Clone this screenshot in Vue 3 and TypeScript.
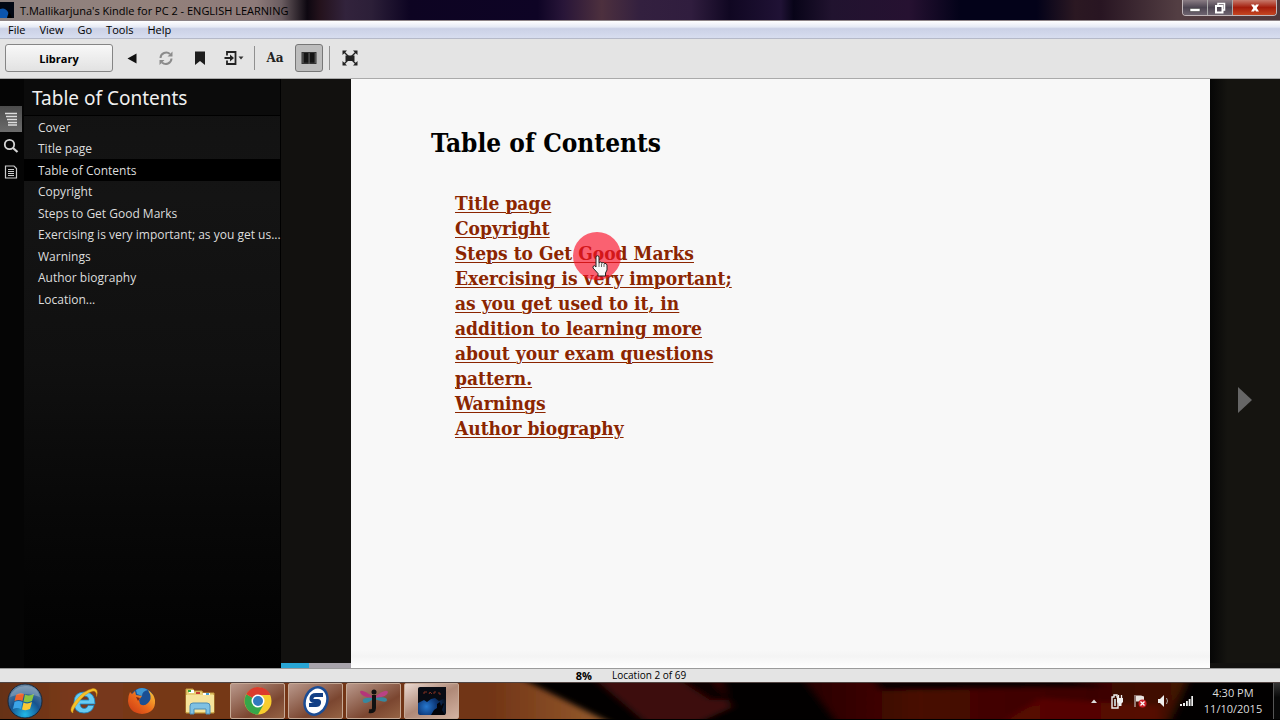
<script setup lang="ts">
import { ref } from 'vue'

const menus = ['File', 'View', 'Go', 'Tools', 'Help']

const contents = [
  'Cover',
  'Title page',
  'Table of Contents',
  'Copyright',
  'Steps to Get Good Marks',
  'Exercising is very important; as you get us...',
  'Warnings',
  'Author biography',
  'Location...',
]
const selected = ref(2)

const links = [
  'Title page',
  'Copyright',
  'Steps to Get Good Marks',
  'Exercising is very important; as you get used to it, in addition to learning more about your exam questions pattern.',
  'Warnings',
  'Author biography',
]

const progress = ref(8)
</script>

<template>
  <div class="desktop">
    <header class="titlebar">
      <svg class="app-icon" width="14" height="16" viewBox="0 0 14 16" aria-hidden="true">
        <rect width="14" height="16" fill="#020814" />
        <path d="M0 7q5-2 8 3l1 6H0z" fill="#0b55ae" />
        <path d="M7 16q1-5 3-5l2 5z" fill="#000" />
      </svg>
      <h1>T.Mallikarjuna's Kindle for PC 2 - ENGLISH LEARNING</h1>
      <div class="window-buttons">
        <button type="button" aria-label="Minimize">
          <svg width="12" height="12" viewBox="0 0 12 12"><path d="M1 6.500h10v3H1z" fill="#fff" stroke="#444" stroke-width=".6" /></svg>
        </button>
        <button type="button" aria-label="Restore">
          <svg width="12" height="12" viewBox="0 0 12 12" fill="none" stroke="#fff" stroke-width="1.500"><path d="M4 3V1.500h6.500V8H9" /><path d="M2 4h6.500v6.500H2z" stroke-width="2" /></svg>
        </button>
        <button type="button" class="close" aria-label="Close">
          <svg width="12" height="12" viewBox="0 0 12 12"><path d="M2 2.500h3l1 1.500 1-1.500h3L7.700 6 10 9.500H7L6 8 5 9.500H2L4.300 6z" fill="#fff" /></svg>
        </button>
      </div>
    </header>

    <nav class="menubar">
      <button v-for="m in menus" :key="m" type="button">{{ m }}</button>
    </nav>

    <div class="toolbar">
      <button type="button" class="library">Library</button>
      <button type="button" class="tool" aria-label="Back">
        <svg width="20" height="20" viewBox="0 0 20 20"><path d="M14.500 5.500v10L5.500 10.500z" fill="#111" /></svg>
      </button>
      <button type="button" class="tool" aria-label="Sync">
        <svg width="20" height="20" viewBox="0 0 20 20" fill="none" stroke="#8b8b8b" stroke-width="2">
          <path d="M4.500 10a5.700 5.700 0 0 1 9.500-4M15.500 10.500A5.700 5.700 0 0 1 6 14.500" />
          <path d="M16.500 3.500v5H11.500zM3.500 17v-5h5z" fill="#8b8b8b" stroke="none" />
        </svg>
      </button>
      <button type="button" class="tool" aria-label="Bookmark">
        <svg width="20" height="20" viewBox="0 0 20 20"><path d="M5 3.500h10v13.500l-5-4-5 4z" fill="#1d1d1d" /></svg>
      </button>
      <button type="button" class="tool" aria-label="Go to">
        <svg width="22" height="20" viewBox="0 0 22 20" fill="none" stroke="#222" stroke-width="1.800">
          <path d="M4 7.500V4h8.500v12H4v-3.500M1.500 10h7" />
          <path d="M7 6.500l4 3.500-4 3.500z" fill="#222" stroke="none" />
          <path d="M15.500 8.500h5L18 11.500z" fill="#333" stroke="none" />
        </svg>
      </button>
      <span class="rule"></span>
      <button type="button" class="tool aa" aria-label="Display options">Aa</button>
      <button type="button" class="tool pressed" aria-label="Two columns" aria-pressed="true">
        <svg width="20" height="20" viewBox="0 0 20 20">
          <path d="M2.500 4h15v12h-15z" fill="#333" />
          <path d="M4.500 5h5v9.500h-5zM10.700 5h5v9.500h-5z" fill="#151515" />
          <path d="M10.100 5v11M4 5v10M16.200 5v10" stroke="#6d6d6d" stroke-width=".8" />
        </svg>
      </button>
      <span class="rule"></span>
      <button type="button" class="tool" aria-label="Full screen">
        <svg width="20" height="20" viewBox="0 0 20 20">
          <path d="M5.500 7.500h9v5.500h-9z" fill="#222" />
          <path d="M4 4l12 12M16 4L4 16" stroke="#222" stroke-width="1.400" />
          <path d="M2.500 2.500H7L2.500 7zM17.500 2.500H13L17.500 7zM2.500 17.500H7L2.500 13zM17.500 17.500H13l4.500-4.500z" fill="#222" />
        </svg>
      </button>
    </div>

    <main class="workspace">
      <nav class="rail">
        <button type="button" class="on" aria-label="Contents">
          <svg width="22" height="26" viewBox="0 0 22 26" stroke="#ddd" stroke-width="1.300"><path d="M5 7.500h12M6 10.500h11M7 13.500h10M8 16.500h9M8 19h9" /></svg>
        </button>
        <button type="button" aria-label="Search">
          <svg width="22" height="28" viewBox="0 0 22 28" fill="none" stroke="#d5d5d5" stroke-width="1.800"><circle cx="9.500" cy="12.500" r="4.700" /><path d="M13 16l4.500 4" stroke-width="2.200" /></svg>
        </button>
        <button type="button" aria-label="Notes">
          <svg width="22" height="26" viewBox="0 0 22 26" fill="none" stroke="#ccc" stroke-width="1.200"><path d="M5.500 6h8.500l2.500 2.500v9.500h-11z" /><path d="M8 9.500h6M8 11.500h6M8 13.500h6M8 15.500h6" stroke-width="1" /></svg>
        </button>
      </nav>

      <aside class="panel">
        <h2>Table of Contents</h2>
        <ul>
          <li v-for="(c, i) in contents" :key="c">
            <button type="button" :class="{ current: i === selected }" @click="selected = i">{{ c }}</button>
          </li>
        </ul>
      </aside>

      <section class="reader">
        <div class="spread">
          <article class="page">
            <h2>Table of Contents</h2>
            <ul>
              <li v-for="l in links" :key="l"><a href="#">{{ l }}</a></li>
            </ul>
            <span class="tap"></span>
            <svg class="pointer" width="16" height="22" viewBox="0 0 16 22" aria-hidden="true">
              <path d="M4 1.500q1.500-1.500 3 0V8l1.500-1 1.500 1 1.500-.5 1 1.200 1.500-.2 1 1.500v5l-1.500 3v3H6v-2.500L1 13v-1.500l1.500-.8L4 12z" fill="#f8f8f8" stroke="#222" stroke-width="1" />
              <path d="M7 8v4M9.500 8.500V12M12 9v3" stroke="#444" stroke-width=".8" />
            </svg>
          </article>
          <button type="button" class="next" aria-label="Next page">
            <svg width="16" height="28" viewBox="0 0 16 28"><path d="M1 1v26l14-13z" fill="#666" /></svg>
          </button>
        </div>
        <div class="progress"><div class="filled" :style="{ width: progress * 5 + '%' }"></div></div>
      </section>
    </main>

    <footer class="status"><b>{{ progress }}%</b><span>Location 2 of 69</span></footer>

    <footer class="taskbar">
      <svg class="glass" viewBox="0 0 1280 38" preserveAspectRatio="none" aria-hidden="true">
        <defs>
          <filter id="soft"><feGaussianBlur stdDeviation="5 2" /></filter>
          <linearGradient id="wood"><stop offset="0" stop-color="#5e2c13" /><stop offset=".15" stop-color="#78391a" /><stop offset=".8" stop-color="#713416" /><stop offset="1" stop-color="#996030" /></linearGradient>
          <linearGradient id="ember"><stop offset="0" stop-color="#260301" /><stop offset=".3" stop-color="#480800" /><stop offset=".75" stop-color="#3b0300" /><stop offset="1" stop-color="#431507" /></linearGradient>
        </defs>
        <rect width="1280" height="38" fill="#020000" />
        <g filter="url(#soft)">
          <path d="M-30-8H515L618 46H-30z" fill="url(#wood)" />
          <path d="M590-8H720L732 26 690 46H650z" fill="#3d1008" />
          <path d="M672-8l38 26h20L710-8z" fill="#0b0000" />
          <path d="M800-8H1190L1168 46H840z" fill="url(#ember)" />
          <path d="M870-6h180l60 10-230 4z" fill="#0c0000" />
          <path d="M1040 16l120 8v20H1000z" fill="#650804" opacity=".6" />
        </g>
      </svg>
      <button type="button" class="start" aria-label="Start">
        <svg width="36" height="36" viewBox="0 0 36 36">
          <defs><radialGradient id="orb" cx=".5" cy=".9" r=".9"><stop offset="0" stop-color="#20b8e8" /><stop offset=".5" stop-color="#17528e" /><stop offset="1" stop-color="#6c8aa4" /></radialGradient></defs>
          <circle cx="18" cy="18" r="17" fill="url(#orb)" stroke="#16263a" />
          <path d="M9 12q4-3 8-1l-1.500 7q-4-2-8 0z" fill="#f0642b" />
          <path d="M18 11.500q4 2 9-.5l-2 7q-4 2-8.500.5z" fill="#8ac440" />
          <path d="M7.500 19q4-2 8 0L14 26q-4-2-8 0z" fill="#3ba4e8" />
          <path d="M16.500 19.500q4 2 8.500-.5l-2 7q-4 2-8 .5z" fill="#fbca35" />
          <path d="M3 14Q6 4 18 3t15 11q-15-6-30 0z" fill="#fff" opacity=".22" />
        </svg>
      </button>
      <button type="button" class="pin" aria-label="Internet Explorer">
        <svg width="32" height="32" viewBox="0 0 32 32">
          <path d="M26 20.500q-2 7.500-10 7.500Q6 28 6 17.500T16.500 7Q27 7 27 19H12q.5 4.500 4.500 4.500 2.500 0 3.500-3zM12 15h9q-.5-4-4.500-4T12 15z" fill="#68cbf2" stroke="#1889c9" stroke-width=".8" />
          <path d="M5 28Q0 26 7 16.500 16 5 25 3.500q6 0 3.500 8 .5-5.500-3.500-5.500Q17 8 9 19q-5 7-4 9z" fill="#f6c129" stroke="#d79211" stroke-width=".5" />
        </svg>
      </button>
      <button type="button" class="pin" aria-label="Firefox">
        <svg width="32" height="32" viewBox="0 0 32 32">
          <defs><linearGradient id="fox" x1="0" y1="1" x2="1" y2="0"><stop offset="0" stop-color="#c93513" /><stop offset=".5" stop-color="#ec6a1c" /><stop offset="1" stop-color="#fbd03a" /></linearGradient></defs>
          <circle cx="16" cy="15" r="12" fill="#1b4f93" />
          <path d="M10 5q6-4 12 0-6 1-6 6l-5-2z" fill="#3f97d2" />
          <path d="M4 7l2 2 3-3 1 4 6 1-3 4 1 4q4 3 8-1 4-4 2-9l-2-4q6 4 7 10Q30 28 16 29 3 28 2 16q0-5 2-9z" fill="url(#fox)" />
          <path d="M10 12l4 1-2 3z" fill="#7c2512" />
        </svg>
      </button>
      <button type="button" class="pin" aria-label="Explorer">
        <svg width="32" height="32" viewBox="0 0 32 32">
          <path d="M2 4h7l1 2h8l1 2h11v20H2z" fill="#e8cf75" stroke="#c1993c" />
          <path d="M5 5h5v3H5zM19 8h7v3h-7z" fill="#fff" /><path d="M4 5h3v2H4z" fill="#3aa43c" /><path d="M12 7h4v2h-4z" fill="#c83d32" /><path d="M22 8h3v2h-3z" fill="#48a0d5" />
          <path d="M2 10h28v17H2z" fill="#f6e39b" />
          <path d="M6 29v-8q0-3 3-3h14q3 0 3 3v8h-4v-5H10v5z" fill="#7fc1e3" stroke="#4c8db5" />
        </svg>
      </button>
      <button type="button" class="task first" aria-label="Chrome">
        <svg width="30" height="30" viewBox="0 0 30 30">
          <circle cx="15" cy="15" r="13.500" fill="#f8cd2e" />
          <path d="M15 15L3.300 8.300A13.500 13.500 0 0 0 15 28.500l5-9z" fill="#36a64a" />
          <path d="M15 15L3.300 8.300A13.500 13.500 0 0 1 27.500 9H15z" fill="#dc3b2d" />
          <circle cx="15" cy="15" r="6.500" fill="#fff" /><circle cx="15" cy="15" r="5" fill="#3279bf" />
        </svg>
      </button>
      <button type="button" class="task" aria-label="S browser">
        <svg width="30" height="32" viewBox="0 0 30 32">
          <ellipse cx="15" cy="16" rx="11" ry="14" transform="rotate(22 15 16)" fill="#fff" stroke="#1b4c94" stroke-width="2.500" />
          <path d="M22 10h-7q-4 0-4.500 3t3 3h3q2 0 1.500 2t-3 2H8" fill="none" stroke="#123f85" stroke-width="4" />
        </svg>
      </button>
      <button type="button" class="task" aria-label="Dragonfly">
        <svg width="32" height="32" viewBox="0 0 32 32">
          <path d="M15 12Q3 3 2 7q1 5 13 6z" fill="#b5357a" /><path d="M17 12Q28 3 30 7q0 5-13 6z" fill="#b94285" />
          <path d="M15 13Q3 12 5 17q3 3 10-3zM17 13q12-2 12 2t-12-1z" fill="#37889f" />
          <circle cx="16" cy="7" r="2.500" fill="#111" /><path d="M16 10v13q0 4-5 3" fill="none" stroke="#111" stroke-width="4" />
        </svg>
      </button>
      <button type="button" class="task active" aria-label="Kindle">
        <svg width="30" height="30" viewBox="0 0 30 30">
          <defs><radialGradient id="dusk" cx=".3" cy=".7" r=".7"><stop stop-color="#2778cf" /><stop offset=".5" stop-color="#0d397a" /><stop offset="1" stop-color="#06101f" /></radialGradient></defs>
          <rect x="1" y="1" width="28" height="28" rx="2" fill="url(#dusk)" />
          <path d="M1 3q2-2 4-2h24v13l-3-1-4 2-4-3-4 1-4 3-3-2-6 3z" fill="#080b13" />
          <path d="M14 29l3-5 3-2v-4l3-2 1 4 2-3 1 1-2 6 3 5z" fill="#020309" />
          <path d="M7 8V6h3M12 8l1-2 2 2M17 8V6h2M22 6v2h2" stroke="#803021" fill="none" />
        </svg>
      </button>

      <div class="tray">
        <svg width="14" height="16" viewBox="0 0 14 16" aria-hidden="true"><path d="M4 10h6L7 6.500z" fill="#ddd" /></svg>
        <svg width="14" height="16" viewBox="0 0 14 16" aria-hidden="true"><path d="M2 4h2V2h3v2h1v11H2z" fill="none" stroke="#eee" stroke-width="1.400" /><path d="M4 6h2v7H4z" fill="#bbb" /><path d="M7 5h6v4l-1.500 1.500V13h-3v-2.500L7 9z" fill="#eee" /><path d="M8.500 2v3M11.500 2v3" stroke="#eee" stroke-width="1.300" /></svg>
        <svg width="14" height="16" viewBox="0 0 14 16" aria-hidden="true"><path d="M2 2v12" stroke="#ddd" /><path d="M3 2.500h5l3 1v5H3z" fill="#e8e4df" /><circle cx="9.500" cy="10.500" r="4" fill="#cb2028" /><path d="M7.500 8.500l4 4M11.500 8.500l-4 4" stroke="#fff" stroke-width="1.300" /></svg>
        <svg width="14" height="16" viewBox="0 0 14 16" aria-hidden="true"><path d="M2 6h2l4-4v12l-4-4H2z" fill="#eee" /><path d="M10.500 5q2 3 0 6" fill="none" stroke="#aaa" /></svg>
        <svg width="14" height="16" viewBox="0 0 14 16" aria-hidden="true"><path d="M1 11h2v2H1zM4 10h2v3H4zM7 8h1.800v5H7zM9.700 6h1.800v7H9.700zM12.300 3H14v10h-1.700z" fill="#eee" /></svg>
        <time class="clock"><span>4:30 PM</span><span>11/10/2015</span></time>
        <span class="peek"></span>
      </div>
    </footer>
  </div>
</template>

<style>
html {
  background: #000;
}
</style>

<style scoped>
.desktop {
  display: flex;
  flex-direction: column;
  height: 100vh;
  overflow: hidden;
  font-family: 'Open Sans', 'Noto Sans', sans-serif;
  font-size: 11px;
  color: #000;
}
button {
  margin: 0;
  padding: 0;
  border: 0;
  background: none;
  color: inherit;
  font: inherit;
}
svg {
  display: block;
}
ul {
  margin: 0;
  padding: 0;
  list-style: none;
}
.titlebar {
  flex: none;
  box-sizing: border-box;
  display: flex;
  align-items: center;
  height: 21px;
  border-bottom: 1px solid #8d8487;
  background: linear-gradient(90deg, #8d817f 0, #93817b 12%, #8d7a79 20%, #6a5c60 22%, #0d0710 24%, #24121c 25%, #32233c 27%, #2c1f38 29%, #0d0422 32%, #0e0425 42%, #281538 44%, #4d303e 47%, #33203f 50%, #301d3e 54%, #100722 57%, #201235 61%, #080418 62%, #21132f 65%, #261131 71%, #030219 75%, #030219 81%, #2b1822 84%, #281522 86%, #533e43 92%, #50383b 100%);
}
.app-icon {
  flex: none;
}
.titlebar h1 {
  flex: 1;
  margin: 0 0 0 6px;
  font-size: 11px;
  font-weight: 400;
}
.window-buttons {
  display: flex;
  align-self: flex-start;
  margin-right: 3px;
  border: 1px solid #c1b7ba;
  border-top: 0;
  border-radius: 0 0 4px 4px;
  overflow: hidden;
}
.window-buttons button {
  display: flex;
  justify-content: center;
  align-items: center;
  width: 25px;
  height: 15px;
  border-right: 1px solid #aaa;
  background: linear-gradient(#8a7c84, #4d4552 50%, #6e6470);
}
.window-buttons .close {
  width: 43px;
  border-right: 0;
  background: linear-gradient(#c77a6b, #a41d0b 50%, #c54622);
}
.menubar {
  flex: none;
  box-sizing: border-box;
  display: flex;
  gap: 14px;
  height: 18px;
  padding: 0 0 1px 8px;
  border-bottom: 1px solid #b5b9c8;
  background: linear-gradient(#fff 0, #e6eaf5 35%, #cbd1e6 45%, #d7ddef 100%);
}
.toolbar {
  flex: none;
  box-sizing: border-box;
  display: flex;
  align-items: center;
  height: 40px;
  padding: 0 0 1px 5px;
  border-bottom: 1px solid #aaa;
  background: #e4e4e4;
}
.library {
  box-sizing: border-box;
  width: 108px;
  height: 28px;
  margin-right: 5px;
  border: 1px solid #858585;
  border-radius: 3px;
  background: linear-gradient(#f8f8f8, #e2e2e2);
  font-weight: 700;
}
.tool {
  display: flex;
  justify-content: center;
  align-items: center;
  box-sizing: border-box;
  width: 28px;
  height: 28px;
  margin-right: 6px;
}
.aa {
  font-family: 'DejaVu Serif', serif;
  font-size: 12px;
  font-weight: 700;
  color: #222;
}
.pressed {
  border: 1px solid #777;
  border-radius: 3px;
  background: #bdbdbd;
}
.rule {
  width: 1px;
  height: 24px;
  margin-right: 6px;
  background: #909090;
}
.workspace {
  flex: 1;
  display: flex;
  min-height: 0;
  background: #030303;
}
.rail {
  flex: none;
  display: flex;
  flex-direction: column;
  width: 24px;
  padding-top: 27px;
  background: #050505;
}
.rail button {
  width: 22px;
}
.rail .on {
  background: linear-gradient(#4b4b4b, #6b6b6b);
}
.panel {
  flex: none;
  width: 256px;
  border-right: 1px solid #000;
  background: linear-gradient(#121212 0, #141414 20%, #101010 48%, #080808 73%, #010101 100%);
  color: #ddd;
}
.panel h2 {
  box-sizing: border-box;
  height: 37px;
  margin: 0;
  padding-left: 8px;
  border-bottom: 1px solid #000;
  background: #0b0b0b;
  color: #f0f0f0;
  font-family: 'Noto Sans', sans-serif;
  font-size: 19px;
  font-weight: 400;
  line-height: 38px;
}
.panel ul {
  display: grid;
  grid-auto-rows: 22px 21px;
}
.panel li button {
  display: block;
  width: 100%;
  height: 100%;
  padding-left: 14px;
  font-size: 12px;
  line-height: 21px;
  text-align: left;
  white-space: nowrap;
}
.panel li .current {
  background: #000;
}
.reader {
  flex: 1;
  display: flex;
  flex-direction: column;
  min-width: 0;
  background: #12110f;
}
.spread {
  flex: 1;
  display: flex;
  min-height: 0;
  padding-left: 70px;
}
.page {
  position: relative;
  flex: 1;
  margin-bottom: -5px;
  padding: 48px 80px 0;
  background: linear-gradient(#f8f8f8 97%, #f4f4f4 98%, #fff);
  font-family: 'DejaVu Serif Condensed', 'DejaVu Serif', serif;
  font-weight: 700;
}
.page h2 {
  margin: 0 0 32px;
  font-size: 26px;
  line-height: 32px;
}
.page ul {
  width: 288px;
  padding-left: 24px;
  font-size: 19px;
  line-height: 25px;
}
.page a {
  color: #8b2500;
  text-decoration: underline;
  text-decoration-thickness: 1px;
  text-underline-offset: 2px;
}
.tap {
  position: absolute;
  left: 222px;
  top: 153px;
  width: 48px;
  height: 48px;
  border-radius: 50%;
  background: rgba(250, 15, 40, 0.65);
}
.pointer {
  position: absolute;
  left: 241px;
  top: 176px;
}
.next {
  display: flex;
  justify-content: center;
  align-items: center;
  width: 70px;
  padding-top: 58px;
  background: linear-gradient(90deg, #060606, #151410 25%, #151410);
}
.progress {
  flex: none;
  width: 70px;
  height: 5px;
  background: #a7a3aa;
}
.filled {
  height: 5px;
  background: #28a5d4;
}
.status {
  flex: none;
  box-sizing: border-box;
  display: flex;
  justify-content: center;
  gap: 20px;
  height: 14px;
  padding-right: 18px;
  border-top: 1px solid #9b9b9b;
  background: #e4e4e4;
  line-height: 13px;
  font-size: 10px;
}
.status b {
  font-size: 11px;
}
.taskbar {
  position: relative;
  isolation: isolate;
  flex: none;
  box-sizing: border-box;
  display: flex;
  align-items: center;
  height: 38px;
  border-top: 1px solid #514442;
  border-bottom: 1px solid #000;
}
.glass {
  position: absolute;
  inset: 0;
  z-index: -1;
  width: 100%;
  height: 100%;
}
.start {
  width: 50px;
  padding-left: 7px;
}
.pin {
  width: 58px;
  padding-left: 18px;
}
.task {
  display: flex;
  justify-content: center;
  align-items: center;
  box-sizing: border-box;
  width: 55px;
  height: 36px;
  margin-right: 3px;
  border: 1px solid #c6a995;
  border-radius: 2px;
  background: linear-gradient(150deg, #b9988b, #7b4630 65%, #956344);
}
.first {
  margin-left: 6px;
}
.active {
  background: linear-gradient(150deg, #ead8d0, #af8977 50%, #d3b2a1);
}
.tray {
  display: flex;
  align-items: center;
  gap: 9px;
  height: 36px;
  margin-left: auto;
  color: #ddd;
}
.clock {
  display: flex;
  flex-direction: column;
  width: 62px;
  font-size: 11px;
  line-height: 16px;
  text-align: center;
}
.peek {
  box-sizing: border-box;
  width: 7px;
  height: 36px;
  border-left: 1px solid #555;
  background: linear-gradient(#353535, #080808 40%);
}
</style>
